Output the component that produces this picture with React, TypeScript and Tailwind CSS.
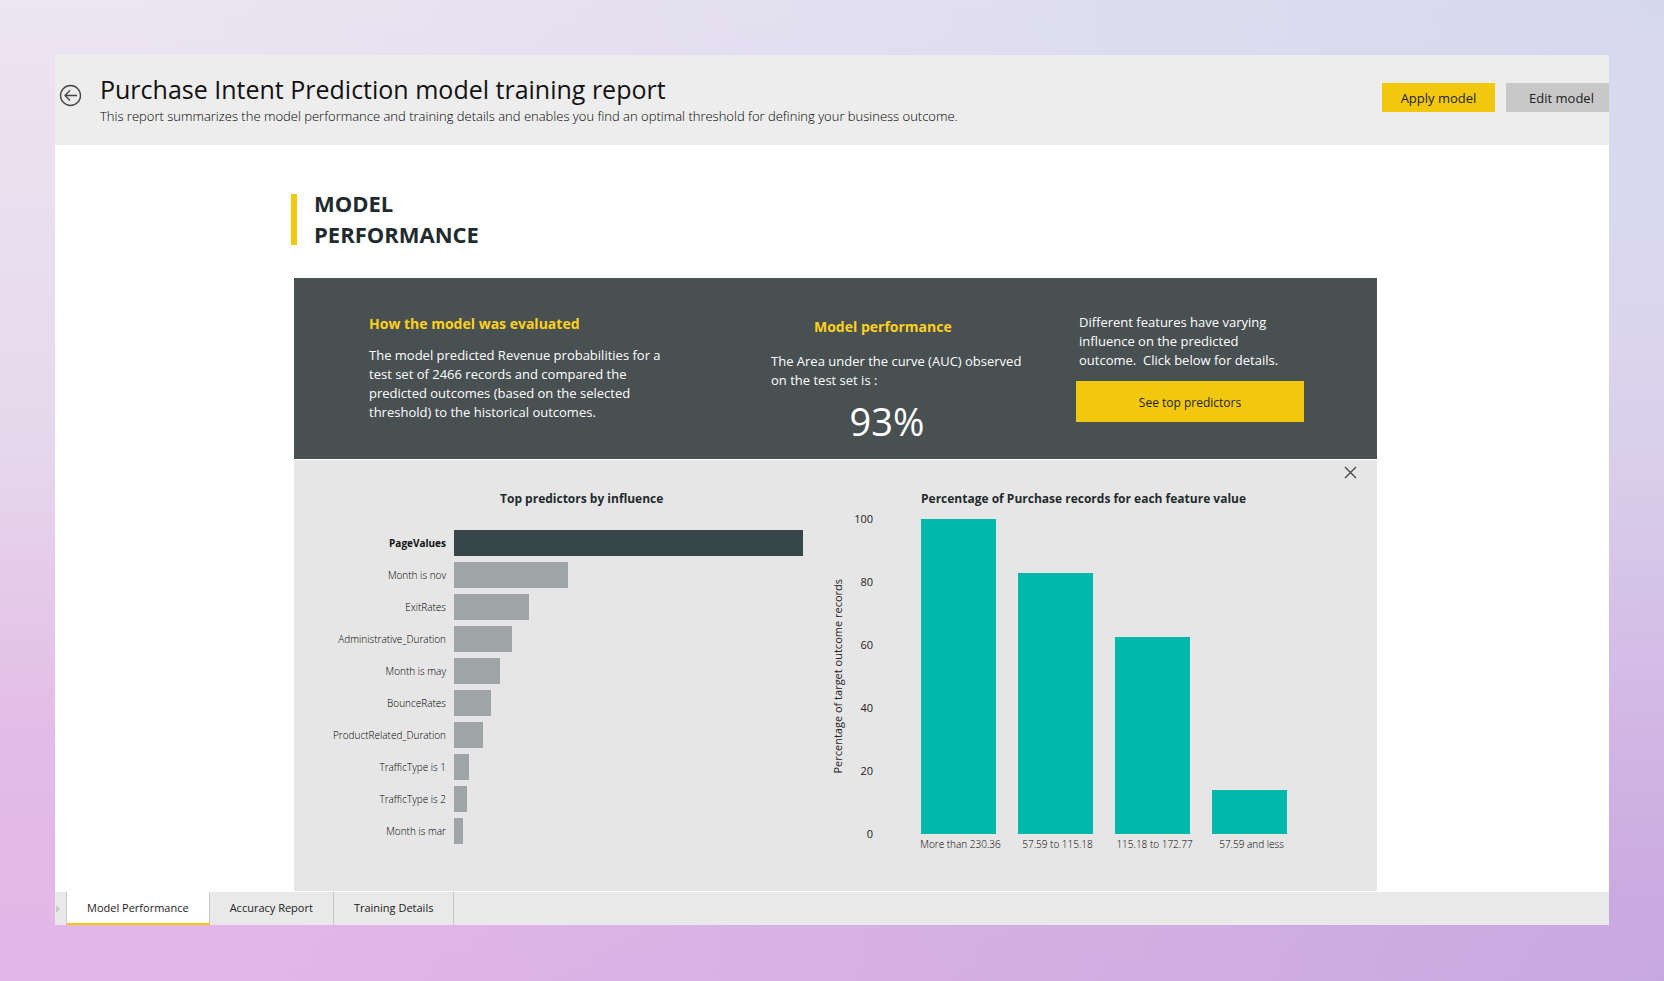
import React from 'react';

const predictors = [
  { label: 'PageValues', width: 349, active: true },
  { label: 'Month is nov', width: 114 },
  { label: 'ExitRates', width: 75 },
  { label: 'Administrative_Duration', width: 58 },
  { label: 'Month is may', width: 46 },
  { label: 'BounceRates', width: 37 },
  { label: 'ProductRelated_Duration', width: 29 },
  { label: 'TrafficType is 1', width: 15 },
  { label: 'TrafficType is 2', width: 13 },
  { label: 'Month is mar', width: 9 },
];

const featureValues = [
  { label: 'More than 230.36', value: 100 },
  { label: '57.59 to 115.18', value: 82.8 },
  { label: '115.18 to 172.77', value: 62.5 },
  { label: '57.59 and less', value: 14 },
];

const ticks = [100, 80, 60, 40, 20, 0];

const tabs = ['Model Performance', 'Accuracy Report', 'Training Details'];

function ReportHeader() {
  return (
    <header className="flex h-[90px] items-start bg-[#ededed]">
      <button type="button" aria-label="Back" className="mt-[29px] ml-1 shrink-0 text-[#444]">
        <svg width="23" height="23" viewBox="0 0 23 23" fill="none" stroke="currentColor" strokeWidth="1.3">
          <circle cx="11.5" cy="11.5" r="10" />
          <path d="M18 11.5H6M11 6.5l-5 5 5 5" />
        </svg>
      </button>
      <div className="ml-[18px] flex-1 pt-[17px]">
        <h1 className="text-[25px] leading-[34px] text-[#111]">
          Purchase Intent Prediction model training report
        </h1>
        <p className="text-[13px] leading-5 font-light text-black">
          This report summarizes the model performance and training details and enables you find an optimal threshold for
          defining your business outcome.
        </p>
      </div>
      <div className="mt-7 flex gap-[11px] text-[13px] text-[#222]">
        <button type="button" className="h-[29px] w-[113px] bg-[#f2c80f] pt-0.5">Apply model</button>
        <button type="button" className="h-[29px] w-[103px] bg-[#c8c8c8] pt-0.5 pl-2">Edit model</button>
      </div>
    </header>
  );
}

function SummaryBand() {
  return (
    <section className="flex h-[181px] bg-[#485052] text-[13px] leading-[19px] text-white">
      <div className="w-[477px] pt-9 pl-[75px]">
        <h3 className="text-[14px] font-bold text-[#ffd11a]">How the model was evaluated</h3>
        <p className="mt-[13px] w-[310px]">
          The model predicted Revenue probabilities for a test set of 2466 records and compared the predicted outcomes
          (based on the selected threshold) to the historical outcomes.
        </p>
      </div>
      <div className="w-[305px] pt-[39px]">
        <h3 className="pl-[43px] text-[14px] font-bold text-[#ffd11a]">Model performance</h3>
        <p className="mt-4 w-[262px]">The Area under the curve (AUC) observed on the test set is :</p>
        <p className="mt-[7px] w-[232px] text-center text-[38px] leading-[48px]">93%</p>
      </div>
      <div className="pt-[35px]">
        <p className="w-[210px] pl-[3px]">
          Different features have varying influence on the predicted outcome.&nbsp; Click below for details.
        </p>
        <button type="button" className="mt-[11px] h-[41px] w-[228px] bg-[#f2c80f] pt-0.5 text-[12px] text-[#222]">
          See top predictors
        </button>
      </div>
    </section>
  );
}

function PredictorChart() {
  return (
    <div className="w-[530px] pt-[29px]">
      <h4 className="pl-[206px] text-[12px] leading-5 font-bold text-[#1f2b2e]">Top predictors by influence</h4>
      <ul className="mt-[21px] flex flex-col gap-[6px]">
        {predictors.map((item) => (
          <li key={item.label} className="flex h-[26px] items-center gap-2">
            <span
              className={
                item.active
                  ? 'w-[152px] text-right text-[10px] font-bold text-[#111]'
                  : 'w-[152px] text-right text-[10px] font-light text-black'
              }
            >
              {item.label}
            </span>
            <span
              className={item.active ? 'h-[26px] bg-[#374649]' : 'h-[26px] bg-[#9fa5a7]'}
              style={{ width: item.width }}
            />
          </li>
        ))}
      </ul>
    </div>
  );
}

function FeatureChart() {
  return (
    <div className="flex-1 pt-[29px]">
      <h4 className="pl-[97px] text-[12px] leading-5 font-bold text-[#1f2b2e]">
        Percentage of Purchase records for each feature value
      </h4>
      <div className="flex">
        <div className="flex h-[335px] w-7 items-center justify-center">
          <span className="rotate-180 text-[11px] whitespace-nowrap text-[#222] [writing-mode:vertical-rl]">
            Percentage of target outcome records
          </span>
        </div>
        <div className="flex h-[335px] w-[21px] flex-col justify-between text-right text-[11px] leading-5 text-[#222]">
          {ticks.map((tick) => (
            <span key={tick}>{tick}</span>
          ))}
        </div>
        <div className="mt-[10px] ml-12 flex gap-[22px]">
          {featureValues.map((item) => (
            <div key={item.label} className="flex w-[75px] flex-col items-center">
              <div className="flex h-[315px] w-full items-end">
                <div className="w-full bg-[#01b8aa]" style={{ height: `${item.value}%` }} />
              </div>
              <span className="mt-0.5 pl-1 text-[10px] leading-4 font-light whitespace-nowrap text-black">
                {item.label}
              </span>
            </div>
          ))}
        </div>
      </div>
    </div>
  );
}

export default function App() {
  return (
    <div className="min-h-screen bg-[radial-gradient(at_100%_0%,#d6d8ee_0%,transparent_65%),radial-gradient(at_100%_100%,#c8a8e0_0%,transparent_60%),linear-gradient(180deg,#ece5f2_0%,#e6d8ec_45%,#e3bce7_75%,#e2b6e7_100%)] p-[55px] font-['Open_Sans','Noto_Sans',sans-serif]">
      <div className="overflow-hidden bg-white">
        <ReportHeader />
        <main className="pt-[43px] pl-[236px]">
          <div className="flex items-center gap-[17px]">
            <span className="h-[51px] w-[6px] bg-[#f2c80f]" />
            <h2 className="w-[220px] text-[22px] leading-[31px] font-bold text-[#1f2b2e]">MODEL PERFORMANCE</h2>
          </div>
          <div className="mt-7 ml-[3px] w-[1083px]">
            <SummaryBand />
            <section className="relative mt-px flex h-[431px] bg-[#e6e6e6]">
              <PredictorChart />
              <FeatureChart />
              <button type="button" aria-label="Close" className="absolute top-[6px] right-5 text-[#444]">
                <svg width="13" height="13" viewBox="0 0 13 13" fill="none" stroke="currentColor" strokeWidth="1.3">
                  <path d="M1 1l11 11M12 1L1 12" />
                </svg>
              </button>
            </section>
          </div>
        </main>
        <nav className="mt-px flex h-[33px] bg-[#e9e9e9] text-[11px] text-[#222]">
          <span className="flex w-3 items-center border-r border-[#c8c8c8]">
            <svg width="6" height="8" viewBox="0 0 6 8" fill="#c8c8c8">
              <path d="M1 0l4 4-4 4z" />
            </svg>
          </span>
          {tabs.map((tab, i) => (
            <button
              key={tab}
              type="button"
              className={
                i === 0
                  ? 'border-r border-b-2 border-r-[#c8c8c8] border-b-[#f2c80f] bg-white px-5 pt-0.5'
                  : 'border-r border-[#c8c8c8] px-5'
              }
            >
              {tab}
            </button>
          ))}
        </nav>
      </div>
    </div>
  );
}
